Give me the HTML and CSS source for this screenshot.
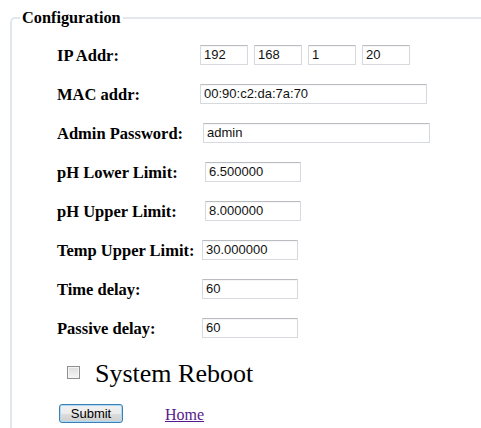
FILE: index.html
```html
<!DOCTYPE html>
<html>
<head>
<meta charset="utf-8">
<title>Configuration</title>
<link rel="stylesheet" href="styles.css">
</head>
<body>
<form class="config-form">
  <fieldset class="config">
    <legend class="config-title">Configuration</legend>
    <div class="fields">
      <label class="field-label">IP Addr:</label>
      <div class="ip-group">
        <input class="field ip-part" type="text" value="192">
        <input class="field ip-part" type="text" value="168">
        <input class="field ip-part" type="text" value="1">
        <input class="field ip-part" type="text" value="20">
      </div>

      <label class="field-label">MAC addr:</label>
      <div><input class="field wide" type="text" value="00:90:c2:da:7a:70"></div>

      <label class="field-label">Admin Password:</label>
      <div><input class="field wide nudge-3" type="text" value="admin"></div>

      <label class="field-label">pH Lower Limit:</label>
      <div><input class="field short nudge-5" type="text" value="6.500000"></div>

      <label class="field-label">pH Upper Limit:</label>
      <div><input class="field short nudge-5" type="text" value="8.000000"></div>

      <label class="field-label">Temp Upper Limit:</label>
      <div><input class="field short nudge-2" type="text" value="30.000000"></div>

      <label class="field-label">Time delay:</label>
      <div><input class="field short nudge-2" type="text" value="60"></div>

      <label class="field-label">Passive delay:</label>
      <div><input class="field short nudge-2" type="text" value="60"></div>
    </div>

    <label class="reboot">
      <input class="reboot-check" type="checkbox">
      <span class="reboot-text">System Reboot</span>
    </label>

    <div class="actions">
      <button class="submit" type="button">Submit</button>
      <a class="home-link" href="#">Home</a>
    </div>
  </fieldset>
</form>
</body>
</html>
```
FILE: styles.css
```css
html {
  overflow: hidden;
}

body {
  margin: 0;
  background: #ffffff;
  font-family: "Liberation Serif", "Times New Roman", serif;
  color: #000;
}

.config-form {
  margin: 0;
}

/* open on the right: the frame runs on past the window edge */
.config {
  margin: 9px 0 0 10px;
  padding: 8px 0 20px 8px;
  min-width: 0;
  border: 2px solid #e2e7ed;
  border-right: 0;
  border-radius: 5px 0 0 5px;
}

.config-title {
  padding: 0 2px;
  font-size: 16.3px;
  line-height: 18px;
  font-weight: bold;
}

.fields {
  display: grid;
  grid-template-columns: 143px auto;
  grid-auto-rows: 39px;
  align-items: center;
  margin-left: 37px;
}

.field-label {
  font-size: 16.5px;
  font-weight: bold;
  line-height: 18px;
  padding-top: 3px;
  white-space: nowrap;
}

.ip-group {
  display: flex;
  gap: 6px;
}

.field {
  box-sizing: border-box;
  height: 20px;
  margin: 0;
  padding: 0 3px;
  font-family: "Liberation Sans", Arial, sans-serif;
  font-size: 13px;
  color: #111;
  background: #fff;
  border: 1px solid #d6d9de;
  border-top-color: #b9bcc1;
  border-radius: 1px;
  box-shadow: inset 0 1px 1px rgba(0, 0, 0, 0.04);
  outline: none;
}

.ip-part {
  width: 48px;
}

.wide {
  width: 227px;
}

.short {
  width: 96px;
}

.nudge-2 {
  margin-left: 2px;
}

.nudge-3 {
  margin-left: 3px;
}

.nudge-5 {
  margin-left: 5px;
}

.reboot {
  display: flex;
  align-items: center;
  gap: 15px;
  margin: 12px 0 0 47px;
  height: 30px;
}

.reboot-check {
  appearance: none;
  -webkit-appearance: none;
  box-sizing: border-box;
  width: 13px;
  height: 13px;
  margin: 0 0 3px 0;
  border: 1px solid #8e8f8f;
  background: linear-gradient(#dcdcdc, #f6f6f6);
  box-shadow: inset 0 0 0 1px #f4f4f4;
}

.reboot-text {
  font-size: 26px;
  line-height: 30px;
}

.actions {
  display: flex;
  align-items: flex-end;
  gap: 42px;
  margin: 15px 0 0 39px;
}

.submit {
  box-sizing: border-box;
  width: 64px;
  height: 19px;
  padding: 0;
  font-family: "Liberation Sans", Arial, sans-serif;
  font-size: 13px;
  line-height: 17px;
  color: #000;
  border: 1px solid #3c7fb1;
  border-radius: 3px;
  background: linear-gradient(#f2f2f2 0%, #ebebeb 50%, #dddddd 51%, #cfcfcf 100%);
  box-shadow: inset 0 0 0 1px #a9dbf6;
}

.home-link {
  font-size: 16px;
  line-height: 18px;
  color: #551a8b;
  text-decoration: underline;
  margin-bottom: -1px;
}
```
